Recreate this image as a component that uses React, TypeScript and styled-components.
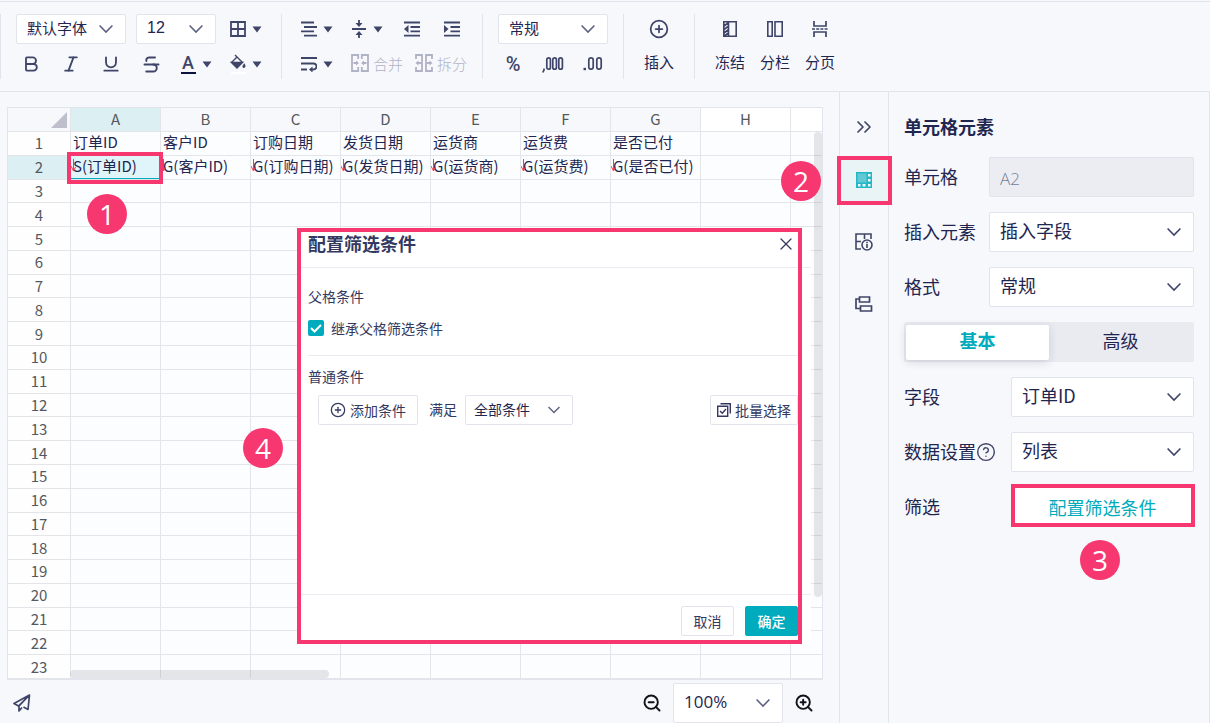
import React from 'react';
import styled, { createGlobalStyle } from 'styled-components';
import {
  Bold,
  ChevronsRight,
  CirclePlus,
  CircleQuestionMark,
  Italic,
  Strikethrough,
  Underline,
  X,
  ZoomIn,
  ZoomOut,
} from 'lucide-react';

const ink = '#1f2650';
const iconInk = '#3f4568';
const line = '#e1e4ec';
const surface = '#f7f8fb';
const teal = '#00abbe';
const pink = '#f7376f';
const ui = "'Noto Sans CJK SC', sans-serif";

const GlobalStyle = createGlobalStyle`
  * { box-sizing: border-box; }
  body { margin: 0; background: ${surface}; color: ${ink}; font-family: ${ui}; font-size: 15px; }
  button, input, select { font: inherit; color: inherit; margin: 0; }
  button { padding: 0; border: 0; background: none; cursor: pointer; }
  svg { display: block; flex: none; }
`;

const Page = styled.div`
  min-height: 100vh;
  display: flex;
  flex-direction: column;
  padding-top: 1px;
`;

/* ---------- toolbar ---------- */

const Toolbar = styled.header`
  display: flex;
  padding: 12px 0;
  border: solid ${line};
  border-width: 1px 0;
  color: ${iconInk};
`;

const Group = styled.div<{ $pad?: number; $last?: boolean }>`
  display: flex;
  flex-direction: column;
  gap: 5px;
  padding: 0 ${(p) => p.$pad ?? 15}px;
  border-right: ${(p) => (p.$last ? 0 : 1)}px solid ${line};
  &:first-child { border-left: 1px solid ${line}; }
`;

const ToolRow = styled.div`
  display: flex;
  gap: 10px;
  height: 30px;
`;

const ToolButton = styled.button<{ $wide?: boolean }>`
  width: ${(p) => (p.$wide ? 40 : 30)}px;
  display: flex;
  align-items: center;
  justify-content: center;
  gap: 6px;
`;

const LabelledTools = styled.div`
  display: flex;
  gap: 12px;
  padding-left: 4px;
`;

const MutedTool = styled.button`
  display: flex;
  align-items: center;
  gap: 4px;
  padding-bottom: 2px;
  font-weight: 300;
  color: #b0b2c5;
`;

const StackRow = styled.div`
  display: flex;
  gap: 15px;
`;

const StackButton = styled.button`
  display: flex;
  flex-direction: column;
  align-items: center;
  gap: 5px;
  color: ${iconInk};
`;

const StackIcon = styled.span`
  height: 30px;
  display: flex;
  align-items: center;
`;

const StackText = styled.span`
  color: ${ink};
  line-height: 26px;
  white-space: nowrap;
`;

const Glyph = styled.span`
  font-family: Roboto, sans-serif;
  font-size: 18px;
  font-weight: 500;
  line-height: 18px;
`;

const Percent = styled.span`
  font-family: Roboto, sans-serif;
  font-size: 20px;
  font-weight: 500;
  line-height: 20px;
`;

const Swatched = styled.span<{ $color: string }>`
  display: flex;
  justify-content: center;
  width: 15px;
  border-bottom: 2px solid ${(p) => p.$color};
`;

/* ---------- form parts ---------- */

const SelectBox = styled.div<{ $w?: string; $h?: number }>`
  position: relative;
  width: ${(p) => p.$w ?? 'auto'};
  height: ${(p) => p.$h ?? 30}px;
  flex: ${(p) => (p.$w ? 'none' : '1')};
  svg { position: absolute; right: 13px; top: 0; height: 100%; pointer-events: none; }
`;

const Select = styled.select<{ $size?: number; $pad?: number; $family?: string }>`
  appearance: none;
  width: 100%;
  height: 100%;
  padding: 0 28px ${(p) => ((p.$size ?? 15) > 17 ? 5 : 3)}px ${(p) => p.$pad ?? 10}px;
  border: 1px solid ${line};
  border-radius: 2px;
  background: #fff;
  color: ${ink};
  font-family: ${(p) => p.$family ?? ui};
  font-size: ${(p) => p.$size ?? 15}px;
`;

const TextInput = styled.input`
  flex: 1;
  min-width: 0;
  height: 40px;
  padding: 2px 10px 0;
  border: 1px solid ${line};
  border-radius: 2px;
  background: #ecedf2;
  color: #787c96;
  font-family: 'Open Sans', sans-serif;
  font-size: 17px;
  font-weight: 300;
`;

/* ---------- workspace ---------- */

const Main = styled.main`
  flex: 1;
  display: flex;
`;

const Workspace = styled.section`
  position: relative;
  flex: 1;
  min-width: 0;
  display: flex;
  flex-direction: column;
  padding: 15px 0 0 7px;
`;

const SheetFrame = styled.div`
  position: relative;
  flex: 1;
  display: grid;
  margin-right: 16px;
  border: 1px solid ${line};
  background: #fcfdff;
`;

const Sheet = styled.table`
  width: 100%;
  table-layout: fixed;
  border-collapse: separate;
  border-spacing: 0;
`;

const cellLines = `
  height: 23px;
  padding: 0;
  border: solid #e4e5e9;
  border-width: 0 1px 1px 0;
  line-height: 20px;
  white-space: nowrap;
`;

const ColHead = styled.th<{ $active?: boolean; $plain?: boolean }>`
  ${cellLines}
  height: 24px;
  padding-bottom: 1px;
  background: ${(p) => (p.$active ? '#dcf0f4' : p.$plain ? '#fff' : surface)};
  color: #55585c;
  font-weight: 400;
  &:last-child { border-right: 0; }
`;

const Corner = styled.td`
  ${cellLines}
  height: 24px;
  background: ${surface};
  svg { margin-left: auto; margin-right: 3px; }
`;

const RowHead = styled.th<{ $active?: boolean }>`
  ${cellLines}
  background: ${(p) => (p.$active ? '#dcf0f4' : '#fefeff')};
  color: #55585c;
  font-weight: 400;
`;

const Cell = styled.td<{ $active?: boolean }>`
  ${cellLines}
  position: relative;
  padding: 0 0 2px 2px;
  background: ${(p) => (p.$active ? '#e0f5f9' : 'transparent')};
  box-shadow: ${(p) => (p.$active ? `inset 0 -1px ${teal}` : 'none')};
  &:last-child { border-right: 0; }
`;

const ExpandMark = styled.svg`
  position: absolute;
  left: 0;
  top: 3px;
`;

const ScrollThumb = styled.div<{ $vertical?: boolean }>`
  position: absolute;
  border-radius: 4px;
  background: rgba(90, 95, 110, 0.15);
  ${(p) =>
    p.$vertical
      ? 'top: 24px; right: 0; width: 8px; height: 465px;'
      : 'left: 62px; bottom: 1px; width: 259px; height: 8px;'}
`;

const StatusBar = styled.footer`
  display: flex;
  align-items: center;
  gap: 11px;
  height: 40px;
  margin-top: 3px;
  padding: 0 25px 0 0;
  color: ${iconInk};
`;

const ZoomButton = styled.button`
  color: #11131c;
`;

const Spacer = styled.span`
  flex: 1;
`;

/* ---------- dialog ---------- */

const Dialog = styled.div`
  position: absolute;
  left: 297px;
  top: 136px;
  width: 514px;
  height: 416px;
  display: flex;
  flex-direction: column;
  background: #fff;
  font-size: 14px;
  color: #333960;
`;

const DialogHead = styled.div`
  display: flex;
  align-items: center;
  justify-content: space-between;
  height: 40px;
  padding: 0 15px 8px 11px;
  border-bottom: 1px solid #ebedf2;
`;

const DialogTitle = styled.h2`
  margin: 0;
  padding-bottom: 2px;
  font-size: 18px;
  font-weight: 700;
  line-height: 24px;
`;

const DialogBody = styled.div`
  flex: 1;
  padding: 18px 13px 0 11px;
`;

const SubTitle = styled.div`
  line-height: 20px;
`;

const CheckLabel = styled.label`
  display: flex;
  align-items: center;
  gap: 7px;
  margin: 12px 0 17px;
  line-height: 20px;
`;

const CheckHolder = styled.span`
  position: relative;
  display: flex;
  width: 16px;
  height: 16px;
  svg { position: absolute; inset: 0; pointer-events: none; }
`;

const CheckInput = styled.input`
  appearance: none;
  width: 16px;
  height: 16px;
  border-radius: 2px;
  background: ${teal};
`;

const Divider = styled.hr`
  margin: 0 0 10px;
  border: 0;
  border-top: 1px solid #e9ebf0;
`;

const Conditions = styled.div`
  display: flex;
  align-items: center;
  margin-top: 9px;
  padding-left: 10px;
`;

const Together = styled.label`
  margin: 0 8px 0 11px;
  padding-bottom: 2px;
`;

const BoxButton = styled.button<{ $w: number; $primary?: boolean }>`
  display: flex;
  align-items: center;
  justify-content: center;
  gap: 4px;
  width: ${(p) => p.$w}px;
  height: 30px;
  padding-bottom: 1px;
  border: 1px solid ${(p) => (p.$primary ? teal : line)};
  border-radius: 2px;
  background: ${(p) => (p.$primary ? teal : '#fff')};
  color: ${(p) => (p.$primary ? '#fff' : 'inherit')};
  font-size: 14px;
  font-weight: ${(p) => (p.$primary ? 500 : 400)};
  white-space: nowrap;
`;

const DialogFoot = styled.div`
  display: flex;
  justify-content: flex-end;
  gap: 11px;
  height: 50px;
  padding: 11px 13px 0;
  border-top: 1px solid #ebedf2;
`;

/* ---------- side rail and panel ---------- */

const Rail = styled.nav`
  width: 50px;
  display: flex;
  flex-direction: column;
  gap: 20px;
  padding-top: 23px;
  border: solid ${line};
  border-width: 0 1px;
  color: ${iconInk};
`;

const RailButton = styled.button<{ $active?: boolean; $short?: boolean }>`
  position: relative;
  height: ${(p) => (p.$short ? 24 : 42)}px;
  display: flex;
  align-items: center;
  justify-content: center;
  background: ${(p) => (p.$active ? '#e9f4f7' : 'none')};
`;

const Panel = styled.aside`
  width: 321px;
  display: flex;
  flex-direction: column;
  gap: 15px;
  padding: 15px 15px 0;
  border-right: 1px solid ${line};
  font-size: 18px;
`;

const PanelTitle = styled.h2`
  margin: 0 0 -3px;
  font-size: 18px;
  font-weight: 700;
  line-height: 38px;
`;

const Field = styled.div`
  position: relative;
  display: flex;
  align-items: center;
  height: 40px;
`;

const FieldLabel = styled.label<{ $w: number }>`
  display: flex;
  align-items: center;
  width: ${(p) => p.$w}px;
  flex: none;
  padding-bottom: 2px;
  svg { margin-top: 2px; }
`;

const Tabs = styled.div`
  display: flex;
  height: 40px;
  padding: 3px 2px 2px;
  border-radius: 2px;
  background: #eaebf1;
`;

const Tab = styled.button<{ $active?: boolean }>`
  flex: 1;
  padding-bottom: 6px;
  border-radius: 2px;
  background: ${(p) => (p.$active ? '#fff' : 'none')};
  box-shadow: ${(p) => (p.$active ? '0 2px 8px rgba(31, 38, 80, 0.16)' : 'none')};
  color: ${(p) => (p.$active ? teal : ink)};
  font-weight: ${(p) => (p.$active ? 700 : 400)};
`;

const LinkButton = styled.button`
  position: relative;
  flex: 1;
  height: 40px;
  background: #fff;
  color: ${teal};
`;

/* ---------- guide marks ---------- */

const Mark = styled.span<{ $inset: string }>`
  position: absolute;
  inset: ${(p) => p.$inset};
  border: 4px solid ${pink};
  pointer-events: none;
  z-index: 2;
`;

const Step = styled.span<{ $x: number; $y: number }>`
  position: absolute;
  left: ${(p) => p.$x}px;
  top: ${(p) => p.$y}px;
  width: 40px;
  height: 40px;
  border-radius: 50%;
  background: ${pink};
  color: #fff;
  font: 400 28px/40px 'Open Sans', sans-serif;
  text-align: center;
  z-index: 3;
`;

/* ---------- icons ---------- */

const Chevron = ({ w = 14, color = '#5d6283' }: { w?: number; color?: string }) => (
  <svg width={w} height="10" viewBox="0 0 14 10" fill="none" stroke={color} strokeWidth="1.6">
    <path d="M.6 1.5 7 8l6.400-6.500" />
  </svg>
);

const Caret = () => (
  <svg width="10" height="7" viewBox="0 0 10 7" fill={iconInk}>
    <path d="M.5.500h9L5 6.500z" />
  </svg>
);

type IconProps = { w?: number; h?: number; sw?: number; children: React.ReactNode };
const Icon = ({ w = 16, h = 16, sw = 1.8, children }: IconProps) => (
  <svg width={w} height={h} viewBox={`0 0 ${w} ${h}`} fill="none" stroke="currentColor" strokeWidth={sw}>
    {children}
  </svg>
);

const BordersIcon = () => (
  <Icon sw={1.8}><path d="M1 1h14v14H1zM8 1v14M1 8h14" /></Icon>
);
const BucketIcon = () => (
  <Icon h={18} sw={1.4}>
    <path d="M5 1l2.500 2.500M1.500 8.500 7 3l5.500 5.500" />
    <path d="M1.500 8.500h11L7 14z" fill="currentColor" />
    <path d="M14.200 10.500c2 3-1.900 3.600-1 1.500z" fill="currentColor" />
  </Icon>
);
const AlignIcon = () => (
  <Icon><path d="M0 1.500h13M3 6h13M0 10.300h13M3 14.600h13" /></Icon>
);
const MiddleIcon = () => (
  <Icon h={18}>
    <path d="M1 9h14M8 0v5M8 18v-5" />
    <path d="M4.500 3h7L8 7zM4.500 15h7L8 11z" fill="currentColor" stroke="none" />
  </Icon>
);
const IndentIcon = ({ out }: { out?: boolean }) => (
  <Icon>
    <path d="M0 1.500h16M6.500 6h9.500M6.500 10.300h9.500M0 14.600h16" />
    <path d={out ? 'M4.500 4v8L0 8z' : 'M0 4v8l4.500-4z'} fill="currentColor" stroke="none" />
  </Icon>
);
const WrapIcon = () => (
  <Icon>
    <path d="M0 2h16M0 7.500h12.500a3 3 0 0 1 0 6H10M0 13.500h6" />
    <path d="M11.500 10.500v6l-3.500-3z" fill="currentColor" stroke="none" />
  </Icon>
);
const MergeIcon = () => (
  <Icon w={18} h={18} sw={1.8}>
    <path d="M7.200 5V1H1v16h6.200v-4M10.800 5V1H17v16h-6.200v-4" />
    <path d="M2.500 9h3M15.500 9h-3" />
    <path d="M5 6.500v5L8 9zM13 6.500v5L10 9z" fill="currentColor" stroke="none" />
  </Icon>
);
const SplitIcon = () => (
  <Icon w={18} h={18} sw={1.8}>
    <path d="M1 5V1h6v16H1v-4M17 5V1h-6v16h6v-4M3 9h3M15 9h-3" />
    <path d="M3.500 6.500v5L.5 9zM14.500 6.500v5l3-2.500z" fill="currentColor" stroke="none" />
  </Icon>
);
const ThousandsIcon = () => (
  <Icon w={22} h={18} sw={1.7}>
    <path d="M2 13.500v1.500l-1.200 2.500" />
    <rect x="4.800" y="2.800" width="3.600" height="11.400" rx="1.800" />
    <rect x="10.800" y="2.800" width="3.600" height="11.400" rx="1.800" />
    <rect x="16.800" y="2.800" width="3.600" height="11.400" rx="1.800" />
  </Icon>
);
const DecimalsIcon = () => (
  <Icon w={22} h={18} sw={1.7}>
    <path d="M1.500 14h2.500" strokeWidth="2.400" />
    <rect x="6.800" y="2.800" width="4.400" height="11.400" rx="2.200" />
    <rect x="14.800" y="2.800" width="4.400" height="11.400" rx="2.200" />
  </Icon>
);
const FreezeIcon = () => (
  <Icon w={14} sw={1.6}>
    <path d="M.8.800h12.400v14.400H.8zM5.500 1v14M1 5l4-3M1 8.500l4-3M1 12l4-3M1 15.200l4-3" />
  </Icon>
);
const ColumnsIcon = () => (
  <Icon sw={1.6}><path d="M.8.800h4.400v14.400H.8zM8 .8h7.200v14.400H8z" /></Icon>
);
const PageBreakIcon = () => (
  <Icon sw={1.7}>
    <path d="M2 0v5h12V0M2 16v-5h12v5" />
    <path d="M0 8h16" strokeDasharray="3 1.200" />
  </Icon>
);
const CellIcon = () => (
  <svg width="16" height="16" viewBox="0 0 16 16">
    <path fill={teal} fillOpacity=".85" d="M0 0h16v16H0z" />
    <path fill="#62c8d4" d="M1.500 1.500h9v9h-9z" />
    <path fill="#eefafb" d="M12 2h2.500v2.500H12zM12 7h2.500v2.500H12zM12 12h2.500v2.500H12zM2 12h2.500v2.500H2zM6.500 12h3v2.500h-3z" />
  </svg>
);
const SheetInfoIcon = () => (
  <Icon w={18} h={18} sw={1.6}>
    <path d="M6 16H1V1h15v5M1 8.500h5M9.500 1v5" />
    <circle cx="12" cy="12" r="5" />
    <path d="M12 11v4M12 8.800v1.400" />
  </Icon>
);
const WidgetsIcon = () => (
  <Icon w={18} h={16} sw={1.7}>
    <path d="M4.500 1h10v5h-10zM5.500 10h11v5h-11zM4.500 3H1v9.500h4.500" />
  </Icon>
);
const BatchIcon = () => (
  <Icon w={14} h={14} sw={1.4}>
    <path d="M.7 3.200h10v10h-10zM3.500.700h9.800v9.800M3 8l2.300 2.200L9 6" />
  </Icon>
);
const PlaneIcon = () => (
  <Icon w={18} h={18} sw={1.7}>
    <path d="M16.500 1 1 9.500l4.500 2.500zM16.500 1l-1.500 14.500-4.500-2.500M16.500 1 6 12v5l3-3.500" strokeLinejoin="round" />
  </Icon>
);

/* ---------- data ---------- */

const columns = ['A', 'B', 'C', 'D', 'E', 'F', 'G', 'H', ''];
const titles = ['订单ID', '客户ID', '订购日期', '发货日期', '运货商', '运货费', '是否已付'];
const rows = Array.from({ length: 23 }, (_, i) => i + 1);

function cellText(row: number, col: number) {
  const title = titles[col];
  if (!title || row > 2) return null;
  if (row === 1) return title;
  return (
    <>
      <ExpandMark width="6" height="13" viewBox="0 0 6 13" fill="none" stroke="#f5384a">
        <path d="M2.500 0v11M0 7l2.500 5 2-4" />
      </ExpandMark>
      {`${col === 0 ? 'S' : 'G'}(${title})`}
      {col === 0 && <Mark $inset="-4px -3px -5px -4px" />}
    </>
  );
}

export default function App() {
  return (
    <Page>
      <GlobalStyle />
      <Toolbar>
        <Group>
          <ToolRow>
            <SelectBox $w="110px">
              <Select aria-label="字体"><option>默认字体</option></Select>
              <Chevron />
            </SelectBox>
            <SelectBox $w="80px">
              <Select aria-label="字号" $size={16} $family="'Liberation Sans', sans-serif"><option>12</option></Select>
              <Chevron />
            </SelectBox>
            <ToolButton $wide aria-label="边框"><BordersIcon /><Caret /></ToolButton>
          </ToolRow>
          <ToolRow>
            <ToolButton aria-label="加粗"><Bold size={20} strokeWidth={2.2} /></ToolButton>
            <ToolButton aria-label="斜体"><Italic size={20} strokeWidth={2.2} /></ToolButton>
            <ToolButton aria-label="下划线"><Underline size={20} strokeWidth={2.2} /></ToolButton>
            <ToolButton aria-label="删除线"><Strikethrough size={21} strokeWidth={2.2} /></ToolButton>
            <ToolButton $wide aria-label="字体颜色">
              <Swatched $color="#0c1242"><Glyph>A</Glyph></Swatched>
              <Caret />
            </ToolButton>
            <ToolButton $wide aria-label="填充颜色">
              <Swatched $color="#fff"><BucketIcon /></Swatched>
              <Caret />
            </ToolButton>
          </ToolRow>
        </Group>
        <Group>
          <ToolRow>
            <ToolButton $wide aria-label="水平对齐"><AlignIcon /><Caret /></ToolButton>
            <ToolButton $wide aria-label="垂直对齐"><MiddleIcon /><Caret /></ToolButton>
            <ToolButton aria-label="减少缩进"><IndentIcon out /></ToolButton>
            <ToolButton aria-label="增加缩进"><IndentIcon /></ToolButton>
          </ToolRow>
          <ToolRow>
            <ToolButton $wide aria-label="自动换行"><WrapIcon /><Caret /></ToolButton>
            <LabelledTools>
              <MutedTool><MergeIcon />合并</MutedTool>
              <MutedTool><SplitIcon />拆分</MutedTool>
            </LabelledTools>
          </ToolRow>
        </Group>
        <Group>
          <ToolRow>
            <SelectBox $w="110px">
              <Select aria-label="数字格式"><option>常规</option></Select>
              <Chevron />
            </SelectBox>
          </ToolRow>
          <ToolRow>
            <ToolButton><Percent>%</Percent></ToolButton>
            <ToolButton aria-label="千分位"><ThousandsIcon /></ToolButton>
            <ToolButton aria-label="小数位"><DecimalsIcon /></ToolButton>
          </ToolRow>
        </Group>
        <Group $pad={20}>
          <StackButton>
            <StackIcon><CirclePlus size={20} strokeWidth={2.1} /></StackIcon>
            <StackText>插入</StackText>
          </StackButton>
        </Group>
        <Group $pad={20} $last>
          <StackRow>
            <StackButton><StackIcon><FreezeIcon /></StackIcon><StackText>冻结</StackText></StackButton>
            <StackButton><StackIcon><ColumnsIcon /></StackIcon><StackText>分栏</StackText></StackButton>
            <StackButton><StackIcon><PageBreakIcon /></StackIcon><StackText>分页</StackText></StackButton>
          </StackRow>
        </Group>
      </Toolbar>

      <Main>
        <Workspace>
          <SheetFrame>
            <Sheet>
              <colgroup>
                <col width="63" />
                {columns.map((c, i) => <col key={i} width={c ? 90 : undefined} />)}
              </colgroup>
              <thead>
                <tr>
                  <Corner>
                    <svg width="16" height="16" viewBox="0 0 16 16" fill="#bdbfcc"><path d="M16 0v16H0z" /></svg>
                  </Corner>
                  {columns.map((c, i) => (
                    <ColHead key={i} scope="col" $active={i === 0} $plain={i > 6}>{c}</ColHead>
                  ))}
                </tr>
              </thead>
              <tbody>
                {rows.map((r) => (
                  <tr key={r}>
                    <RowHead scope="row" $active={r === 2}>{r}</RowHead>
                    {columns.map((_, i) => (
                      <Cell key={i} $active={r === 2 && i === 0}>{cellText(r, i)}</Cell>
                    ))}
                  </tr>
                ))}
              </tbody>
            </Sheet>
            <ScrollThumb $vertical />
            <ScrollThumb />
          </SheetFrame>

          <StatusBar>
            <ToolButton aria-label="发送"><PlaneIcon /></ToolButton>
            <Spacer />
            <ZoomButton aria-label="缩小"><ZoomOut size={20} strokeWidth={2.3} /></ZoomButton>
            <SelectBox $w="110px" $h={40}>
              <Select aria-label="缩放" $size={17} $family="'Open Sans', sans-serif"><option>100%</option></Select>
              <Chevron />
            </SelectBox>
            <ZoomButton aria-label="放大"><ZoomIn size={20} strokeWidth={2.3} /></ZoomButton>
          </StatusBar>

          <Dialog role="dialog" aria-labelledby="filter-title">
            <DialogHead>
              <DialogTitle id="filter-title">配置筛选条件</DialogTitle>
              <button aria-label="关闭"><X size={20} strokeWidth={1.5} /></button>
            </DialogHead>
            <DialogBody>
              <SubTitle>父格条件</SubTitle>
              <CheckLabel>
                <CheckHolder>
                  <CheckInput type="checkbox" defaultChecked />
                  <svg width="16" height="16" viewBox="0 0 16 16" fill="none" stroke="#fff" strokeWidth="2">
                    <path d="M3 8l3.500 3.500L13 5" />
                  </svg>
                </CheckHolder>
                继承父格筛选条件
              </CheckLabel>
              <Divider />
              <SubTitle>普通条件</SubTitle>
              <Conditions>
                <BoxButton $w={100}><CirclePlus size={16} strokeWidth={1.9} />添加条件</BoxButton>
                <Together htmlFor="match">满足</Together>
                <SelectBox $w="108px">
                  <Select id="match" $size={14} $pad={8}><option>全部条件</option></Select>
                  <Chevron w={12} />
                </SelectBox>
                <Spacer />
                <BoxButton $w={88}><BatchIcon />批量选择</BoxButton>
              </Conditions>
            </DialogBody>
            <DialogFoot>
              <BoxButton $w={53}>取消</BoxButton>
              <BoxButton $w={53} $primary>确定</BoxButton>
            </DialogFoot>
            <Mark $inset="0 9px 0 0" />
          </Dialog>

          <Step $x={87} $y={102}>1</Step>
          <Step $x={781} $y={69}>2</Step>
          <Step $x={243} $y={336}>4</Step>
        </Workspace>

        <Rail>
          <RailButton $short aria-label="收起"><ChevronsRight size={24} strokeWidth={1.7} /></RailButton>
          <RailButton $active aria-label="单元格元素">
            <CellIcon />
            <Mark $inset="-3px -4px -4px -3px" />
          </RailButton>
          <RailButton aria-label="单元格属性"><SheetInfoIcon /></RailButton>
          <RailButton aria-label="控件设置"><WidgetsIcon /></RailButton>
        </Rail>

        <Panel>
          <PanelTitle>单元格元素</PanelTitle>
          <Field>
            <FieldLabel $w={85} htmlFor="cell">单元格</FieldLabel>
            <TextInput id="cell" defaultValue="A2" readOnly />
          </Field>
          <Field>
            <FieldLabel $w={85} htmlFor="element">插入元素</FieldLabel>
            <SelectBox $h={40}>
              <Select id="element" $size={18}><option>插入字段</option></Select>
              <Chevron color={iconInk} />
            </SelectBox>
          </Field>
          <Field>
            <FieldLabel $w={85} htmlFor="format">格式</FieldLabel>
            <SelectBox $h={40}>
              <Select id="format" $size={18}><option>常规</option></Select>
              <Chevron color={iconInk} />
            </SelectBox>
          </Field>
          <Tabs role="tablist">
            <Tab role="tab" aria-selected $active>基本</Tab>
            <Tab role="tab" aria-selected={false}>高级</Tab>
          </Tabs>
          <Field>
            <FieldLabel $w={107} htmlFor="field">字段</FieldLabel>
            <SelectBox $h={40}>
              <Select id="field" $size={18}><option>订单ID</option></Select>
              <Chevron color={iconInk} />
            </SelectBox>
          </Field>
          <Field>
            <FieldLabel $w={107} htmlFor="data">
              数据设置
              <CircleQuestionMark size={20} strokeWidth={1.7} color={iconInk} />
            </FieldLabel>
            <SelectBox $h={40}>
              <Select id="data" $size={18}><option>列表</option></Select>
              <Chevron color={iconInk} />
            </SelectBox>
          </Field>
          <Field>
            <FieldLabel $w={107} htmlFor="filter">筛选</FieldLabel>
            <LinkButton id="filter">
              配置筛选条件
              <Mark $inset="-3px -1px 0 0" />
            </LinkButton>
            <Step $x={176} $y={53}>3</Step>
          </Field>
        </Panel>
      </Main>
    </Page>
  );
}
